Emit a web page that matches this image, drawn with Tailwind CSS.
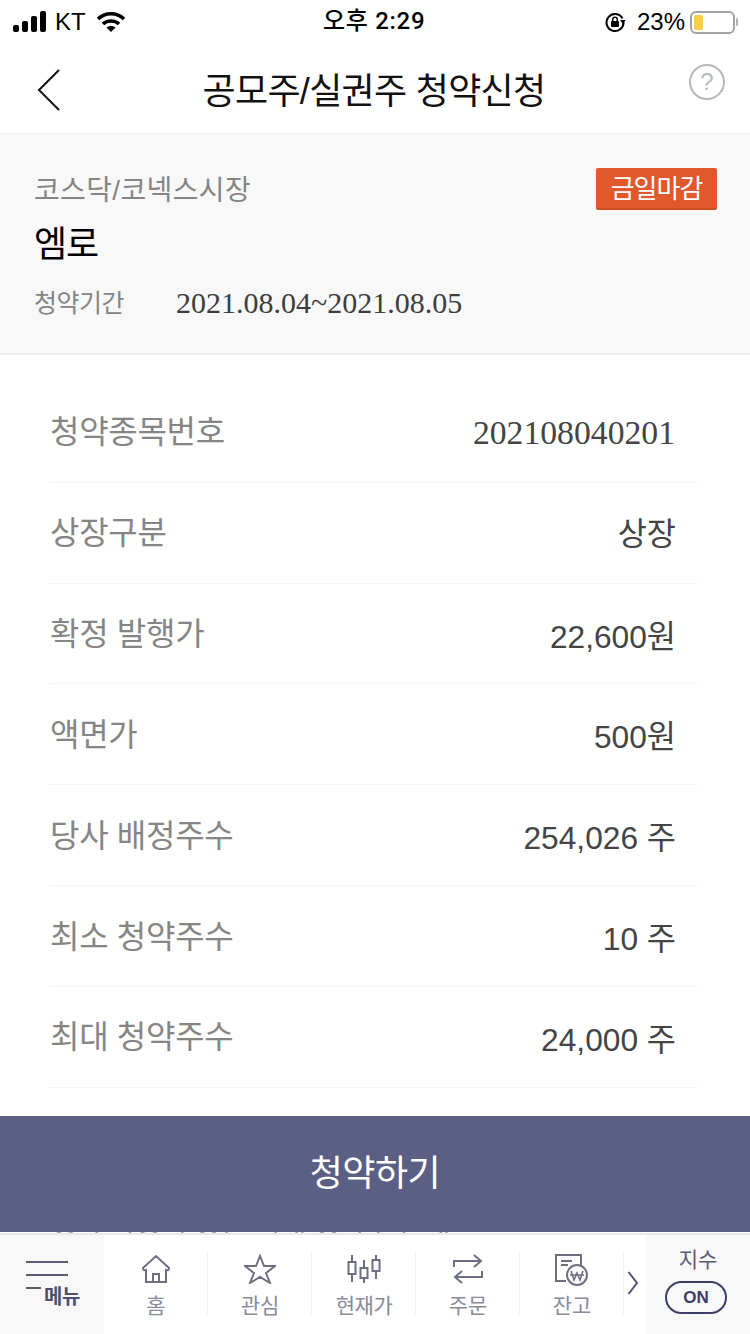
<!DOCTYPE html>
<html lang="ko">
<head>
    <meta charset="UTF-8">
    <meta name="viewport" content="width=device-width, initial-scale=1.0">
    <title>공모주/실권주 청약신청</title>
    <script src="https://cdn.jsdelivr.net/npm/@tailwindcss/browser@4"></script>
</head>
<body class="bg-white">
<div class="w-[750px] h-[1334px] overflow-hidden flex flex-col font-['Liberation_Sans','Noto_Sans_CJK_KR',sans-serif]">

    <!-- Status bar -->
    <div class="h-[44px] shrink-0 relative flex items-center justify-between pl-[13px] pr-[12px] text-black">
        <div class="flex items-center">
            <svg width="35" height="22" viewBox="0 0 35 22" fill="#000"><rect x="0" y="14" width="6" height="7" rx="2"/><rect x="9" y="10" width="6" height="11" rx="2"/><rect x="18" y="5" width="6" height="16" rx="2"/><rect x="27" y="0" width="6" height="21" rx="2"/></svg>
            <span class="ml-[7px] text-[24px] leading-none">KT</span>
            <svg class="ml-[10px]" width="30" height="22" viewBox="0 0 30 22" fill="none" stroke="#000" stroke-width="3.6"><path d="M2 8 C9 1 21 1 28 8"/><path d="M7 13 C11 9 19 9 23 13"/><path d="M15 21 L10.500 16.500 C13 14.500 17 14.500 19.500 16.500 Z" fill="#000" stroke="none"/></svg>
        </div>
        <div class="absolute left-[323px] top-[6px] text-[24px] leading-[30px] font-medium font-['Roboto','Noto_Sans_CJK_KR',sans-serif] tracking-[0.7px]">오후 2:29</div>
        <div class="flex items-center">
            <svg width="22" height="22" viewBox="0 0 22 22" fill="none" stroke="#000" stroke-width="2"><path d="M18.500 7.500 A8.500 8.500 0 1 0 19.500 11"/><path d="M16 9 L21.500 9 L19 13 Z" fill="#000" stroke="none"/><rect x="7" y="10" width="8" height="6" rx="1" fill="#000" stroke="none"/><path d="M8.700 10 V8.400 a2.300 2.300 0 0 1 4.600 0 V10" stroke-width="1.400"/></svg>
            <span class="ml-[11px] text-[24px] leading-none">23%</span>
            <div class="ml-[5px] w-[45px] h-[23px] border-2 border-[#a3a3a3] rounded-[6px] p-[2px]">
                <div class="w-[9px] h-full bg-[#f7ce46] rounded-[2px]"></div>
            </div>
            <div class="ml-[1px] w-[2px] h-[8px] bg-[#b0b0b0] rounded-r"></div>
        </div>
    </div>

    <!-- Nav -->
    <div class="h-[89px] shrink-0 relative flex items-center justify-center">
        <svg class="absolute left-[37px] top-[25px]" width="24" height="42" viewBox="0 0 24 42" fill="none" stroke="#111" stroke-width="2"><path d="M22 1 L2 21 L22 41"/></svg>
        <h1 class="text-[36px] leading-none text-[#111] tracking-[-0.7px] mt-[6px] mr-[2px]">공모주/실권주 청약신청</h1>
        <div class="absolute left-[689px] top-[20px] w-[36px] h-[36px] rounded-full border-2 border-[#b9b9b9] flex items-center justify-center text-[24px] leading-none text-[#b9b9b9]">?</div>
    </div>

    <!-- Info panel -->
    <div class="h-[222px] shrink-0 bg-[#f8f8f8] border-t border-[#f2f2f2] border-b-2 border-b-[#eeeeee] pl-[34px] pr-[33px] pt-[33px] relative">
        <div class="flex items-start justify-between">
            <span class="mt-[3px] text-[28px] leading-[42px] text-[#858585] tracking-[0.35px]">코스닥/코넥스시장</span>
            <span class="mt-[1px] w-[121px] h-[42px] bg-[#e0582b] border-b-2 border-[#cf4f25] rounded-[2px] text-white text-[26px] leading-[42px] text-center tracking-[-1px]">금일마감</span>
        </div>
        <div class="mt-[6px] text-[36px] leading-[54px] text-black tracking-[-1px]">엠로</div>
        <div class="mt-[11px] flex items-center">
            <span class="w-[142px] text-[25px] leading-[40px] text-[#858585] tracking-[-0.5px]">청약기간</span>
            <span class="text-[30px] leading-[40px] text-[#3d3d3d] font-['Liberation_Serif',serif]">2021.08.04~2021.08.05</span>
        </div>
    </div>

    <!-- Detail rows -->
    <div class="flex-1 ml-[50px] mr-[52px] pt-[27px] text-[#444]">
        <div class="h-[100.83px] border-b border-[#f4f4f4] flex items-center justify-between pr-[22px]">
            <span class="mt-[1px] text-[32px] leading-[50px] text-[#858585] tracking-[-0.3px]">청약종목번호</span>
            <span class="mt-[2px] mr-[1px] text-[33.7px] leading-[52px] font-['Liberation_Serif',serif]">202108040201</span>
        </div>
        <div class="h-[100.83px] border-b border-[#f4f4f4] flex items-center justify-between pr-[22px]">
            <span class="mt-[1px] text-[32px] leading-[50px] text-[#858585] tracking-[-0.3px]">상장구분</span>
            <span class="mt-[2px] text-[31.7px] leading-[50px]">상장</span>
        </div>
        <div class="h-[100.83px] border-b border-[#f4f4f4] flex items-center justify-between pr-[22px]">
            <span class="mt-[1px] text-[32px] leading-[50px] text-[#858585] tracking-[-0.3px]">확정 발행가</span>
            <span class="mt-[6px] text-[31.7px] leading-[50px]">22,600원</span>
        </div>
        <div class="h-[100.83px] border-b border-[#f4f4f4] flex items-center justify-between pr-[22px]">
            <span class="mt-[1px] text-[32px] leading-[50px] text-[#858585] tracking-[-0.3px]">액면가</span>
            <span class="mt-[6px] text-[31.7px] leading-[50px]">500원</span>
        </div>
        <div class="h-[100.83px] border-b border-[#f4f4f4] flex items-center justify-between pr-[22px]">
            <span class="mt-[1px] text-[32px] leading-[50px] text-[#858585] tracking-[-0.3px]">당사 배정주수</span>
            <span class="mt-[6px] text-[31.7px] leading-[50px]">254,026 주</span>
        </div>
        <div class="h-[100.83px] border-b border-[#f4f4f4] flex items-center justify-between pr-[22px]">
            <span class="mt-[1px] text-[32px] leading-[50px] text-[#858585] tracking-[-0.3px]">최소 청약주수</span>
            <span class="mt-[6px] text-[31.7px] leading-[50px]">10 주</span>
        </div>
        <div class="h-[100.83px] border-b border-[#f4f4f4] flex items-center justify-between pr-[22px]">
            <span class="mt-[1px] text-[32px] leading-[50px] text-[#858585] tracking-[-0.3px]">최대 청약주수</span>
            <span class="mt-[6px] text-[31.7px] leading-[50px]">24,000 주</span>
        </div>
    </div>

    <!-- Submit -->
    <div class="h-[116px] shrink-0 bg-[#5c5f84] flex items-center justify-center text-white text-[36px] tracking-[-0.5px]">청약하기</div>

    <!-- Clipped row under the button -->
    <div class="h-[1px] shrink-0 overflow-hidden pl-[51px]">
        <div class="mt-[-23px] text-[28px] leading-[30px] text-[#a0a0a0]">청약 가능 수량은 최대 청약주수 내</div>
    </div>

    <!-- Tab bar -->
    <div class="h-[101px] shrink-0 border-t-2 border-[#e8e9ed] flex text-[#77778a]">
        <div class="w-[104px] bg-[#f8f8f8] relative">
            <div class="absolute left-[26px] top-[26px] w-[42px] h-[2px] bg-[#5a5b75]"></div>
            <div class="absolute left-[26px] top-[39px] w-[42px] h-[2px] bg-[#5a5b75]"></div>
            <div class="absolute left-[26px] top-[52px] w-[15px] h-[2px] bg-[#5a5b75]"></div>
            <span class="absolute left-[44px] top-[50px] text-[20px] leading-[24px] font-bold text-[#4f5070] tracking-[-0.5px]">메뉴</span>
        </div>
        <div class="w-[104px] flex flex-col items-center pt-[19px] relative">
            <svg width="30" height="30" viewBox="0 0 30 30" fill="none" stroke="#6f6f84" stroke-width="2"><path d="M2 14 L15 2 L28 14 Q28 17 25 16 V28 H5 V16 Q2 17 2 14 Z"/><path d="M12 28 V20 H18 V28"/></svg>
            <span class="mt-[6px] text-[21px] leading-[32px] text-[#8a8a99]">홈</span>
            <div class="absolute right-0 top-[16px] w-px h-[64px] bg-[#f2f2f2]"></div>
        </div>
        <div class="w-[104px] flex flex-col items-center pt-[19px] relative">
            <svg width="32" height="30" viewBox="0 0 32 30" fill="none" stroke="#6f6f84" stroke-width="2"><path d="M16 2 L20 12 L31 12 L22 19 L26 29 L16 23 L6 29 L10 19 L1 12 L12 12 Z"/></svg>
            <span class="mt-[6px] text-[21px] leading-[32px] text-[#8a8a99]">관심</span>
            <div class="absolute right-0 top-[16px] w-px h-[64px] bg-[#f2f2f2]"></div>
        </div>
        <div class="w-[104px] flex flex-col items-center pt-[19px] relative">
            <svg width="36" height="30" viewBox="0 0 36 30" fill="none" stroke="#6f6f84" stroke-width="2"><path d="M6 1 V8 M6 20 V28 M18 6 V14 M18 24 V29 M30 1 V6 M30 17 V25"/><rect x="2.500" y="8" width="7" height="12"/><rect x="14.500" y="14" width="7" height="10"/><rect x="26.500" y="6" width="7" height="11"/></svg>
            <span class="mt-[6px] text-[21px] leading-[32px] text-[#8a8a99] tracking-[-0.5px]">현재가</span>
            <div class="absolute right-0 top-[16px] w-px h-[64px] bg-[#f2f2f2]"></div>
        </div>
        <div class="w-[104px] flex flex-col items-center pt-[19px] relative">
            <svg width="30" height="30" viewBox="0 0 30 30" fill="none" stroke="#6f6f84" stroke-width="2"><path d="M1 13 V7 H28 M21 1 L28 7 L21 13"/><path d="M29 17 V23 H2 M9 17 L2 23 L9 29"/></svg>
            <span class="mt-[6px] text-[21px] leading-[32px] text-[#8a8a99]">주문</span>
            <div class="absolute right-0 top-[16px] w-px h-[64px] bg-[#f2f2f2]"></div>
        </div>
        <div class="w-[104px] flex flex-col items-center pt-[19px] relative">
            <svg width="36" height="32" viewBox="0 0 36 32" fill="none" stroke="#6f6f84" stroke-width="2"><path d="M12 27 H2 V1 H27 V12"/><path d="M7 7 H18 M7 11 H14"/><circle cx="23" cy="21" r="10"/><path d="M17 17 L20 26 L23 19 L26 26 L29 17 M16 21 H30" stroke-width="1.600"/></svg>
            <span class="mt-[4px] text-[21px] leading-[32px] text-[#8a8a99]">잔고</span>
            <div class="absolute right-0 top-[16px] w-px h-[64px] bg-[#f2f2f2]"></div>
        </div>
        <div class="w-[22px] pt-[36px] pl-[3px]">
            <svg width="12" height="24" viewBox="0 0 12 24" fill="none" stroke="#4f5070" stroke-width="2"><path d="M1.500 1 L10 12 L1.500 23"/></svg>
        </div>
        <div class="flex-1 bg-[#f8f8f8] flex flex-col items-center pt-[10px]">
            <span class="text-[21px] leading-[30px] text-[#5a5b75]">지수</span>
            <div class="mt-[6px] mr-[4px] w-[62px] h-[33px] border-2 border-[#3b3d63] rounded-full flex items-center justify-center text-[17px] font-bold text-[#3b3d63]">ON</div>
        </div>
    </div>
</div>
</body>
</html>
